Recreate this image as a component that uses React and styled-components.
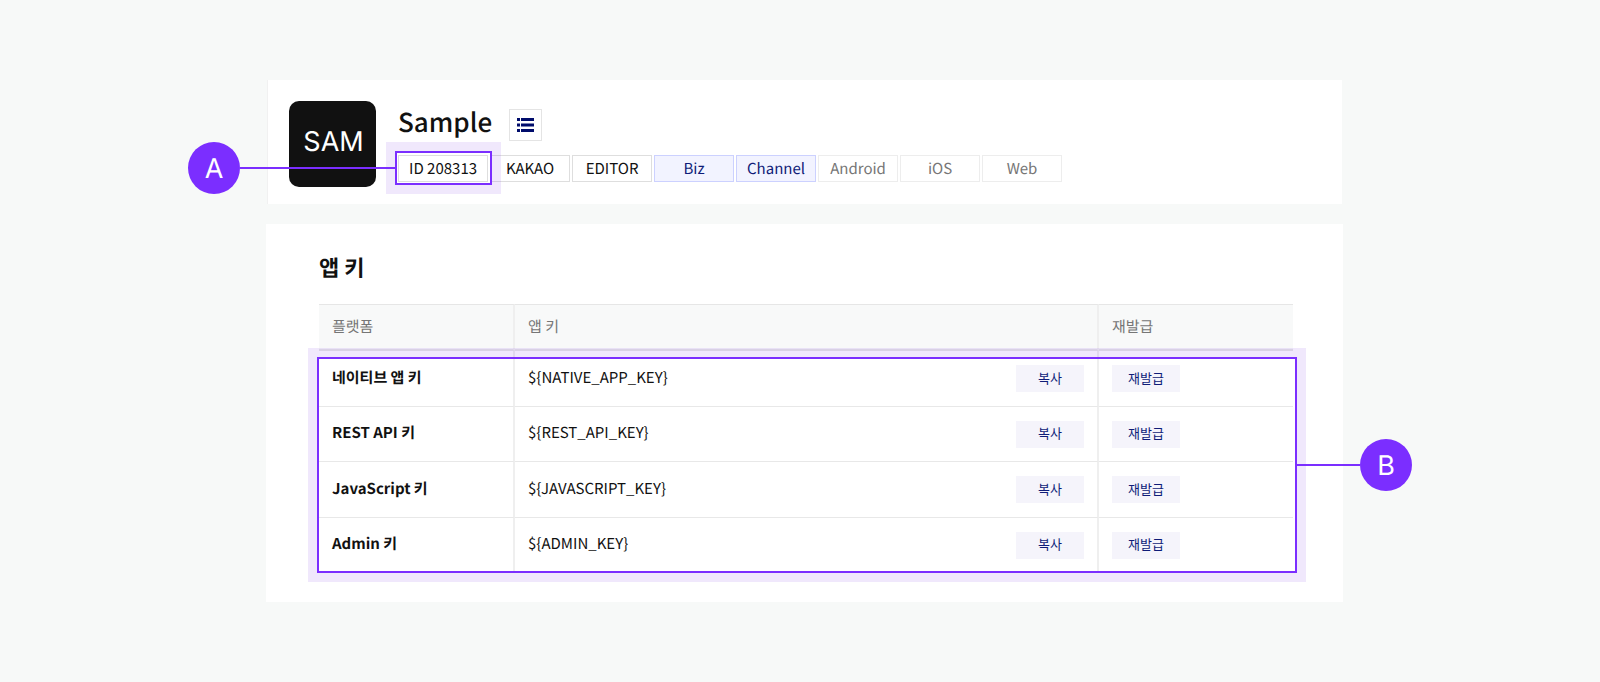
import React from 'react'
import styled, { createGlobalStyle, css } from 'styled-components'

const GlobalStyle = createGlobalStyle`
* {
  box-sizing: border-box;
}

body {
  margin: 0;
  background-color: #f7f9f8;
  color: #111;
  font-family: 'Noto Sans CJK KR', 'Noto Sans', sans-serif;
  font-size: 15px;
  line-height: 24px;
  text-rendering: geometricPrecision;
}
`

const Page = styled.main`
display: flex;
flex-direction: column;
gap: 20px;
padding: 80px 257px 80px 266px;

@media (max-width: 64em){
    padding: 80px;
}
`

const Header = styled.header`
display: flex;
align-items: flex-start;
gap: 22px;
margin: 0 1px;
padding: 21px 21px 17px;
background-color: #fff;
border-left: 1px solid #f1f1f1;
`

const Logo = styled.div`
display: flex;
justify-content: center;
align-items: center;
flex: none;
width: 87px;
height: 86px;
padding: 0 0 4px 2px;
border-radius: 10px;
background-color: #111;
color: #fff;
font-family: 'Inter', sans-serif;
font-size: 27px;
`

const Info = styled.div`
flex: 1;
`

const TitleRow = styled.div`
display: flex;
align-items: flex-start;
gap: 17px;
height: 54px;
`

const AppName = styled.h1`
margin: 0;
font-size: 26px;
font-weight: 500;
line-height: 42px;
`

const ListButton = styled.button`
display: flex;
justify-content: center;
align-items: center;
width: 33px;
height: 32px;
margin-top: 8px;
padding: 0;
border: 1px solid #e4e4e4;
background-color: #fff;
color: #000c6b;
`

const Tags = styled.ul`
display: flex;
flex-wrap: wrap;
gap: 2px;
margin: 0;
padding: 0;
list-style: none;
`

const tones = {
  base: css`
border-color: #dedede;
color: #111;
`,
  active: css`
border-color: #ccd1ff;
background-color: #f2f3ff;
color: #0f1c78;
`,
  muted: css`
border-color: #ededed;
color: #767676;
`,
}

const Tag = styled.li`
position: relative;
display: flex;
justify-content: center;
align-items: center;
min-width: 80px;
height: 27px;
padding: 0 10px;
border: 1px solid;
white-space: nowrap;
${(props) => tones[props.$tone]}
`

const Card = styled.section`
padding: 26px 50px 29px 53px;
background-color: #fff;
`

const SectionTitle = styled.h2`
margin: 0 0 20px;
font-size: 22px;
font-weight: 700;
line-height: 34px;
`

const TableWrap = styled.div`
position: relative;
`

const Table = styled.table`
width: 100%;
border-collapse: separate;
border-spacing: 0;
table-layout: fixed;
`

const HeadCell = styled.th`
width: ${(props) => props.$width || 'auto'};
height: 47px;
padding: 0 13px;
border-top: 1px solid #e6e6e6;
border-bottom: 2px solid #e6e6e6;
border-right: ${(props) => (props.$last ? 'none' : '2px solid #efefef')};
background-color: #f8f9f9;
color: #767676;
font-size: 15px;
font-weight: 400;
text-align: left;
`

const Row = styled.tr`
height: 56px;

&:nth-child(even) {
    height: 55px;
}
`

const cell = css`
padding: 0 13px;
border-bottom: 1px solid #e8e8e8;
text-align: left;
`

const NameCell = styled.th`
${cell}
padding-bottom: 2px;
border-right: 2px solid #efefef;
font-size: 15px;
font-weight: 700;
`

const KeyCell = styled.td`
${cell}
border-right: 2px solid #efefef;
`

const ActionCell = styled.td`
${cell}
`

const KeyRow = styled.div`
display: flex;
justify-content: space-between;
align-items: center;
`

const KeyValue = styled.span`
padding-bottom: 2px;
`

const SmallButton = styled.button`
display: block;
flex: none;
width: 68px;
height: 27px;
padding: 0 0 2px;
border: none;
background-color: #f5f4fb;
color: #0f1c78;
font-family: inherit;
font-size: 13px;
line-height: 24px;
`

const Highlight = styled.span`
position: absolute;
inset: ${(props) => props.$inset};
z-index: 1;
border: 2px solid #7b2eff;
box-shadow: 0 0 0 9px rgba(110, 30, 230, 0.1);
pointer-events: none;
`

const Callout = styled.span`
position: absolute;
top: 50%;
${(props) => (props.$side === 'left' ? 'right: 100%;' : 'left: 100%;')}
display: flex;
flex-direction: ${(props) => (props.$side === 'left' ? 'row' : 'row-reverse')};
align-items: center;
transform: translateY(-50%);
`

const Line = styled.span`
width: ${(props) => props.$length};
height: 2px;
background-color: #7b2eff;
`

const Badge = styled.span`
display: flex;
justify-content: center;
align-items: center;
width: 52px;
height: 52px;
padding-top: 2px;
border-radius: 50%;
background-color: #7b2eff;
color: #fff;
font-family: 'Inter', sans-serif;
font-size: 27px;
`

const tags = [
  { label: 'ID 208313', tone: 'base', marked: true },
  { label: 'KAKAO', tone: 'base' },
  { label: 'EDITOR', tone: 'base' },
  { label: 'Biz', tone: 'active' },
  { label: 'Channel', tone: 'active' },
  { label: 'Android', tone: 'muted' },
  { label: 'iOS', tone: 'muted' },
  { label: 'Web', tone: 'muted' },
]

const keys = [
  { name: '네이티브 앱 키', value: '${NATIVE_APP_KEY}' },
  { name: 'REST API 키', value: '${REST_API_KEY}' },
  { name: 'JavaScript 키', value: '${JAVASCRIPT_KEY}' },
  { name: 'Admin 키', value: '${ADMIN_KEY}' },
]

const ListIcon = () => (
  <svg width="17" height="14" viewBox="0 0 17 14" fill="currentColor" aria-hidden="true">
    <path d="M0 0h3v3H0zM4 0h13v3H4zM0 5.5h3v3H0zM4 5.5h13v3H4zM0 11h3v3H0zM4 11h13v3H4z" />
  </svg>
)

const Marker = ({ label, side, inset, length }) => {
  return (
    <Highlight $inset={inset}>
      <Callout $side={side}>
        <Badge>{label}</Badge>
        <Line $length={length} />
      </Callout>
    </Highlight>
  )
}

const AppHeader = () => {
  return (
    <Header>
      <Logo>SAM</Logo>
      <Info>
        <TitleRow>
          <AppName>Sample</AppName>
          <ListButton type="button" aria-label="앱 목록">
            <ListIcon />
          </ListButton>
        </TitleRow>
        <Tags>
          {tags.map((tag) => (
            <Tag key={tag.label} $tone={tag.tone}>
              {tag.label}
              {tag.marked && <Marker label="A" side="left" inset="-5px -5px -4px -4px" length="157px" />}
            </Tag>
          ))}
        </Tags>
      </Info>
    </Header>
  )
}

const AppKeys = () => {
  return (
    <Card>
      <SectionTitle>앱 키</SectionTitle>
      <TableWrap>
        <Table>
          <thead>
            <tr>
              <HeadCell scope="col" $width="196px">플랫폼</HeadCell>
              <HeadCell scope="col">앱 키</HeadCell>
              <HeadCell scope="col" $width="194px" $last>재발급</HeadCell>
            </tr>
          </thead>
          <tbody>
            {keys.map((item) => (
              <Row key={item.name}>
                <NameCell scope="row">{item.name}</NameCell>
                <KeyCell>
                  <KeyRow>
                    <KeyValue>{item.value}</KeyValue>
                    <SmallButton type="button">복사</SmallButton>
                  </KeyRow>
                </KeyCell>
                <ActionCell>
                  <SmallButton type="button">재발급</SmallButton>
                </ActionCell>
              </Row>
            ))}
          </tbody>
        </Table>
        <Marker label="B" side="right" inset="53px -4px 0 -2px" length="65px" />
      </TableWrap>
    </Card>
  )
}

const App = () => {
  return (
    <>
      <GlobalStyle />
      <Page>
        <AppHeader />
        <AppKeys />
      </Page>
    </>
  )
}

export default App
